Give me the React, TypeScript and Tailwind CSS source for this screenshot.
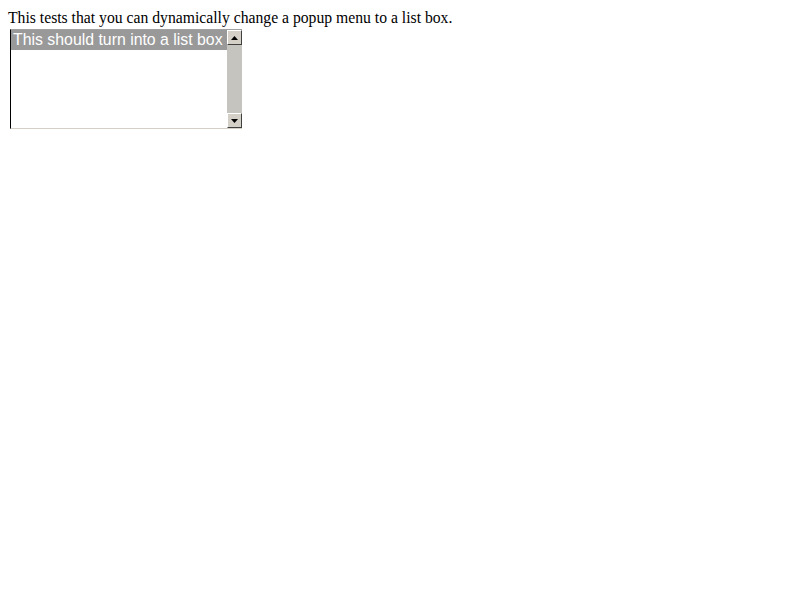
import React from 'react';

function ArrowButton({ up }: { up?: boolean }) {
  return (
    <div className="w-[15px] h-[15px] bg-[#d4d0c8] border border-t-white border-l-white border-r-[#404040] border-b-[#404040] flex items-center justify-center">
      <svg width="7" height="4" viewBox="0 0 7 4">
        {up ? <polygon points="3.5,0 7,4 0,4" fill="#000" /> : <polygon points="0,0 7,0 3.5,4" fill="#000" />}
      </svg>
    </div>
  );
}

export default function App() {
  return (
    <div className="p-2 bg-white min-h-screen">
      <div className="font-['Liberation_Serif',serif] text-[15.7px] leading-[19px] text-black">
        This tests that you can dynamically change a popup menu to a list box.
      </div>
      <div className="mt-[2px] ml-[2px] w-[232px] h-[100px] flex border-t border-t-[#a0a0a0] border-l border-l-black border-b border-b-[#d4d0c8] bg-white">
        <div className="flex-1">
          <div className="h-[20px] bg-[#999999] text-white font-['Liberation_Sans',sans-serif] text-[15.85px] leading-[20px] pl-[2px] whitespace-nowrap overflow-hidden">
            This should turn into a list box
          </div>
        </div>
        <div className="w-[15px] flex flex-col justify-between bg-[#c6c4bf]">
          <ArrowButton up />
          <ArrowButton />
        </div>
      </div>
    </div>
  );
}
